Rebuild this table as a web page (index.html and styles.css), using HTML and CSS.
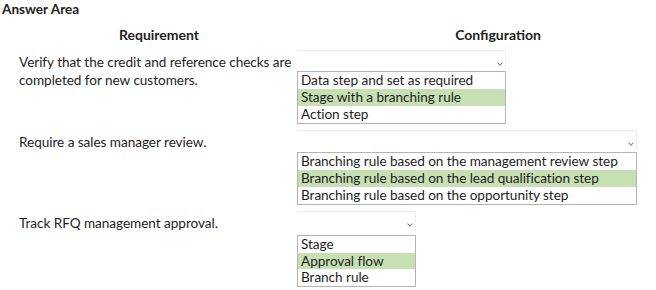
FILE: index.html
```html
<!DOCTYPE html>
<html>
<head>
<meta charset="utf-8">
<link rel="stylesheet" href="styles.css">
</head>
<body>
<div class="page">
  <div class="title">Answer Area</div>
  <div class="heads">
    <div class="head head-req">Requirement</div>
    <div class="head head-conf">Configuration</div>
  </div>

  <div class="row row-1">
    <div class="req">Verify that the credit and reference checks are completed for new customers.</div>
    <div class="conf w-1">
      <div class="select"><span class="chev"></span></div>
      <div class="list">
        <div class="opt">Data step and set as required</div>
        <div class="opt sel">Stage with a branching rule</div>
        <div class="opt">Action step</div>
      </div>
    </div>
  </div>

  <div class="row row-2">
    <div class="req">Require a sales manager review.</div>
    <div class="conf w-2">
      <div class="select"><span class="chev"></span></div>
      <div class="list">
        <div class="opt">Branching rule based on the management review step</div>
        <div class="opt sel">Branching rule based on the lead qualification step</div>
        <div class="opt">Branching rule based on the opportunity step</div>
      </div>
    </div>
  </div>

  <div class="row row-3">
    <div class="req">Track RFQ management approval.</div>
    <div class="conf w-3">
      <div class="select"><span class="chev"></span></div>
      <div class="list">
        <div class="opt">Stage</div>
        <div class="opt sel">Approval flow</div>
        <div class="opt">Branch rule</div>
      </div>
    </div>
  </div>
</div>
</body>
</html>
```

FILE: styles.css
```css
html, body {
  margin: 0;
  padding: 0;
  background: #ffffff;
}
body {
  font-family: Lato, "Open Sans", sans-serif;
  color: #1e1e1e;
  width: 656px;
  height: 290px;
  overflow: hidden;
}
.title {
  font-weight: 700;
  font-size: 13.6px;
  line-height: 16px;
  padding: 1px 0 0 2px;
  height: 17px;
}
.heads {
  display: flex;
  margin-top: 8px;
  height: 22px;
}
.head {
  font-weight: 700;
  font-size: 14px;
  line-height: 18px;
  text-align: center;
}
.head-req {
  width: 322px;
}
.head-conf {
  width: 320px;
  padding-left: 22px;
}
.row {
  display: grid;
  grid-template-columns: 297px 1fr;
}
.row-1 { margin-top: 2px; }
.row-2 { margin-top: 6px; }
.row-3 { margin-top: 6px; }
.req {
  padding: 3px 0 0 19px;
  font-size: 13.6px;
  line-height: 18px;
  letter-spacing: -0.05px;
}
.conf {
  display: flex;
  flex-direction: column;
  gap: 2px;
}
.row-2 .conf { gap: 3px; }
.row-3 .conf { gap: 5px; }
.w-1 { width: 209px; }
.w-2 { width: 340px; }
.w-3 { width: 119px; }
.select {
  height: 18px;
  border-top: 1px solid #ececec;
  border-right: 1px solid #efefef;
  position: relative;
}
.chev {
  position: absolute;
  right: 3px;
  top: 10px;
  width: 3px;
  height: 3px;
  border-right: 1px solid #8a8a8a;
  border-bottom: 1px solid #8a8a8a;
  transform: rotate(45deg);
}
.list {
  border: 1px solid #b4b4b4;
}
.opt {
  height: 17px;
  line-height: 17px;
  font-size: 13.6px;
  letter-spacing: -0.05px;
  padding-left: 3px;
  white-space: nowrap;
}
.row-3 .opt { height: 16.5px; line-height: 16.5px; }
.sel {
  background: #c6e0b4;
}
```
